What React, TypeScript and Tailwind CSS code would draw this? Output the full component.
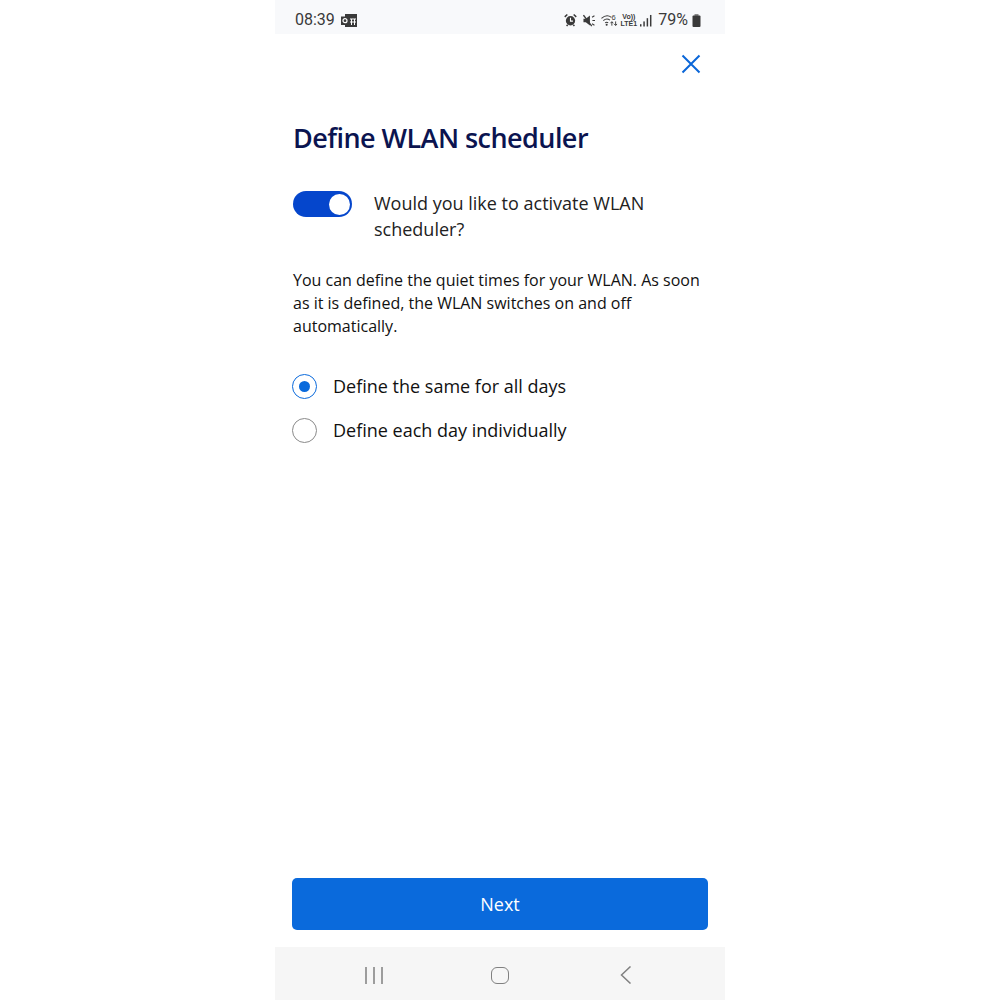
const StatusIcons = () => {
  return (
    <div className="flex items-center">
      <svg width="13" height="14" viewBox="0 0 14 14" className="mr-[6px]">
        <circle cx="7" cy="7.8" r="5" fill="#3a3a3a" />
        <path d="M0.8 3.6 L3.6 1 M13.2 3.6 L10.4 1 M2.8 13.4 L4 12 M11.2 13.4 L10 12" stroke="#3a3a3a" strokeWidth="1.6" />
        <path d="M7 4.6 V8.2 H9.6" stroke="#fff" strokeWidth="1.2" fill="none" />
      </svg>
      <svg width="12" height="13" viewBox="0 0 13 13" className="mr-[6px]">
        <path d="M0.5 4.5 H3 L7.5 1 V12 L3 8.5 H0.5 Z" fill="#3a3a3a" />
        <path d="M0.5 0.8 L9.5 12.6" stroke="#3a3a3a" strokeWidth="1.4" />
        <path d="M9.8 3 L12.4 1.4 M10.2 6.5 H13 M9.8 10 L12.4 11.6" stroke="#3a3a3a" strokeWidth="1.1" />
      </svg>
      <svg width="17" height="14" viewBox="0 0 18 14" className="mr-[3px]">
        <path d="M0.5 5.2 Q6 0.4 11 4.2 M2.5 7.6 Q6 4.6 9.5 7.2 M4.4 10 Q6 8.6 7.6 10" stroke="#3a3a3a" strokeWidth="1.1" fill="none" />
        <circle cx="6" cy="12" r="1.1" fill="#3a3a3a" />
        <text x="11" y="6.5" fontSize="8" fill="#3a3a3a" fontFamily="Liberation Sans">6</text>
        <path d="M11.5 13 V9 M10 10.4 L11.5 8.8 L13 10.4 M15.5 8.5 V12.6 M14 11.2 L15.5 12.8 L17 11.2" stroke="#3a3a3a" strokeWidth="1" fill="none" />
      </svg>
      <div className="flex flex-col items-center w-[15px] text-[7px] leading-[7px] font-bold text-[#3a3a3a] font-['Liberation_Sans',sans-serif] mr-[4px]">
        <span>Vo))</span>
        <span>LTE1</span>
      </div>
      <svg width="12" height="13" viewBox="0 0 13 13" className="mr-[6px]">
        <rect x="0" y="10.5" width="1.6" height="2.5" fill="#3a3a3a" />
        <rect x="3.6" y="7.5" width="1.6" height="5.5" fill="#3a3a3a" />
        <rect x="7.2" y="4" width="1.6" height="9" fill="#3a3a3a" />
        <rect x="10.8" y="0.5" width="1.6" height="12.5" fill="#3a3a3a" />
      </svg>
      <span className="text-[16px] leading-none text-[#3a3a3a] font-['Roboto',sans-serif] mr-[4px]">79%</span>
      <svg width="9" height="13" viewBox="0 0 9 13">
        <rect x="2.5" y="0" width="4" height="2" fill="#8a8a8a" />
        <rect x="0.5" y="1.5" width="8" height="11.5" rx="1" fill="#3a3a3a" />
      </svg>
    </div>
  )
}

const Radio = ({ checked, label }: { checked?: boolean; label: string }) => {
  return (
    <div className="flex items-center gap-[16px] h-[26px]">
      {checked ? (
        <div className="w-[25px] h-[25px] rounded-full border-[1.5px] border-[#0a6adc] flex items-center justify-center shrink-0">
          <div className="w-[11px] h-[11px] rounded-full bg-[#0a6adc]"></div>
        </div>
      ) : (
        <div className="w-[25px] h-[25px] rounded-full border-[1.5px] border-[#8a8a8a] shrink-0"></div>
      )}
      <span className="text-[18px] leading-[26px] text-[#111]">{label}</span>
    </div>
  )
}

const App = () => {
  return (
    <div className="min-h-[1000px] bg-white flex justify-center font-['Open_Sans',sans-serif]">
      <div className="w-[450px] h-[1000px] flex flex-col">
        <div className="h-[34px] bg-[#f8f9fb] flex items-center justify-between pt-[6px] pl-[20px] pr-[24px] shrink-0">
          <div className="flex items-center gap-[6px]">
            <span className="text-[16px] leading-none text-[#3a3a3a] font-['Roboto',sans-serif]">08:39</span>
            <svg width="16" height="13" viewBox="0 0 16 13">
              <rect x="4" y="0" width="12" height="13" fill="#3a3a3a" />
              <rect x="0" y="2.5" width="8" height="8.5" fill="#3a3a3a" />
              <circle cx="4" cy="6.7" r="2" fill="none" stroke="#fff" strokeWidth="1.2" />
              <path d="M9 5 H15 M10.5 5 V11 M13.5 5 V11 M9 8 H15" stroke="#fff" strokeWidth="1" />
            </svg>
          </div>
          <StatusIcons />
        </div>

        <div className="flex-1 flex flex-col px-[17px]">
          <div className="flex justify-end pt-[19px] pr-[6px]">
            <svg width="22" height="22" viewBox="0 0 22 22">
              <path d="M2.5 2.5 L19.5 19.5 M19.5 2.5 L2.5 19.5" stroke="#0a66d8" strokeWidth="2" />
            </svg>
          </div>

          <h1 className="mt-[43px] ml-[1px] text-[27px] leading-[40px] font-semibold text-[#0b1450] tracking-[-0.55px]">Define WLAN scheduler</h1>

          <div className="mt-[33px] ml-[1px] flex items-start gap-[22px]">
            <div className="w-[59px] h-[26px] rounded-full bg-[#0546cc] flex items-center justify-end pr-[2px] shrink-0">
              <div className="w-[21px] h-[21px] rounded-full bg-white"></div>
            </div>
            <p className="-mt-[1px] text-[18px] leading-[26px] text-[#222]">Would you like to activate WLAN scheduler?</p>
          </div>

          <p className="mt-[27px] ml-[1px] text-[16px] leading-[23px] text-[#111]">You can define the quiet times for your WLAN. As soon as it is defined, the WLAN switches on and off automatically.</p>

          <div className="mt-[35px] flex flex-col gap-[18px]">
            <Radio checked label="Define the same for all days" />
            <Radio label="Define each day individually" />
          </div>

          <div className="mt-auto mb-[17px]">
            <button className="w-full h-[52px] rounded-[5px] bg-[#0a6adc] text-white text-[18px] font-medium">Next</button>
          </div>
        </div>

        <div className="h-[53px] bg-[#f6f6f6] flex items-center pt-[3px] px-[36px] shrink-0">
          <div className="flex-1 flex justify-center">
            <svg width="18" height="17" viewBox="0 0 18 17">
              <path d="M1 0 V17 M9 0 V17 M17 0 V17" stroke="#808080" strokeWidth="1.5" />
            </svg>
          </div>
          <div className="flex-1 flex justify-center">
            <div className="w-[18px] h-[17px] rounded-[6px] border-[1.5px] border-[#808080]"></div>
          </div>
          <div className="flex-1 flex justify-center">
            <svg width="12" height="18" viewBox="0 0 12 18">
              <path d="M10.5 0.5 L1.5 9 L10.5 17.5" stroke="#808080" strokeWidth="1.5" fill="none" />
            </svg>
          </div>
        </div>
      </div>
    </div>
  )
}

export default App
